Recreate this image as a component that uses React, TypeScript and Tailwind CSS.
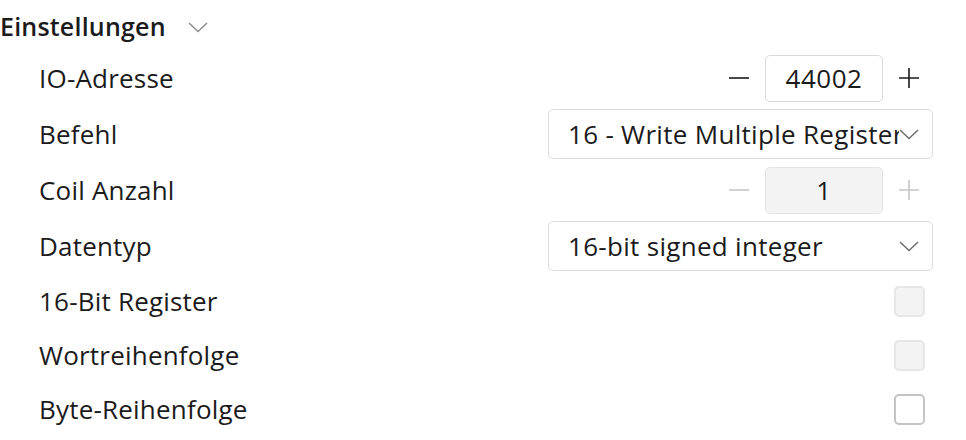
const font = { fontFamily: '"Open Sans", "Noto Sans", sans-serif' };

function Chevron({ className }: { className?: string }) {
  return (
    <svg width="20" height="11" viewBox="0 0 20 11" className={className}>
      <path d="M1 1 L10 9.5 L19 1" fill="none" stroke="currentColor" strokeWidth="1.4" />
    </svg>
  );
}

function Minus({ disabled }: { disabled?: boolean }) {
  return (
    <svg width="22" height="22" viewBox="0 0 22 22" className={disabled ? "text-[#c6c6c6]" : "text-[#1b1b1b]"}>
      <path d="M1 11 H21" stroke="currentColor" strokeWidth="1.6" />
    </svg>
  );
}

function Plus({ disabled }: { disabled?: boolean }) {
  return (
    <svg width="22" height="22" viewBox="0 0 22 22" className={disabled ? "text-[#c6c6c6]" : "text-[#1b1b1b]"}>
      <path d="M1 11 H21 M11 1 V21" stroke="currentColor" strokeWidth="1.6" />
    </svg>
  );
}

function Spinner({ value, disabled }: { value: string; disabled?: boolean }) {
  return (
    <div className="flex items-center gap-[15px] pr-[13px]">
      <Minus disabled={disabled} />
      <div
        className={`w-[118px] h-[47px] rounded-[5px] border flex items-center justify-center text-[26px] tracking-[0.5px] text-[#1b1b1b] ${
          disabled ? "bg-[#f3f3f3] border-[#e3e3e3]" : "bg-white border-[#d9d9d9]"
        }`}
      >
        {value}
      </div>
      <Plus disabled={disabled} />
    </div>
  );
}

function Dropdown({ value }: { value: string }) {
  return (
    <div className="w-[385px] h-[50px] rounded-[5px] border border-[#dcdcdc] bg-white flex items-center pl-[19px] pr-[13px]">
      <div className="flex-1 overflow-hidden whitespace-nowrap text-[26px] tracking-[0.3px] text-[#1b1b1b]">{value}</div>
      <Chevron className="text-[#6a6a6a] shrink-0" />
    </div>
  );
}

function Checkbox({ disabled }: { disabled?: boolean }) {
  return (
    <div
      className={`w-[31px] h-[31px] mr-[8px] rounded-[5px] border-2 ${
        disabled ? "bg-[#f3f3f3] border-[#e6e6e6]" : "bg-white border-[#c4c4c4]"
      }`}
    />
  );
}

const rows = [
  { label: "IO-Adresse", h: "h-14", control: <Spinner value="44002" /> },
  { label: "Befehl", h: "h-14", control: <Dropdown value="16 - Write Multiple Register" /> },
  { label: "Coil Anzahl", h: "h-14", control: <Spinner value="1" disabled /> },
  { label: "Datentyp", h: "h-14", control: <Dropdown value="16-bit signed integer" /> },
  { label: "16-Bit Register", h: "h-[54px]", control: <Checkbox disabled /> },
  { label: "Wortreihenfolge", h: "h-[54px]", control: <Checkbox disabled /> },
  { label: "Byte-Reihenfolge", h: "h-[54px]", control: <Checkbox /> },
];

export default function App() {
  return (
    <div className="w-[966px] h-[440px] bg-white overflow-hidden text-[#1b1b1b]" style={font}>
      <div className="h-[50px] flex items-center gap-[22px] pt-[4px]">
        <span className="text-[25px] font-semibold tracking-[0.2px]">Einstellungen</span>
        <Chevron className="text-[#8a8a8a]" />
      </div>
      {rows.map((r) => (
        <div key={r.label} className={`${r.h} flex items-center justify-between pl-[39px] pr-[33px]`}>
          <span className="text-[26px] tracking-[0.2px]">{r.label}</span>
          {r.control}
        </div>
      ))}
    </div>
  );
}
